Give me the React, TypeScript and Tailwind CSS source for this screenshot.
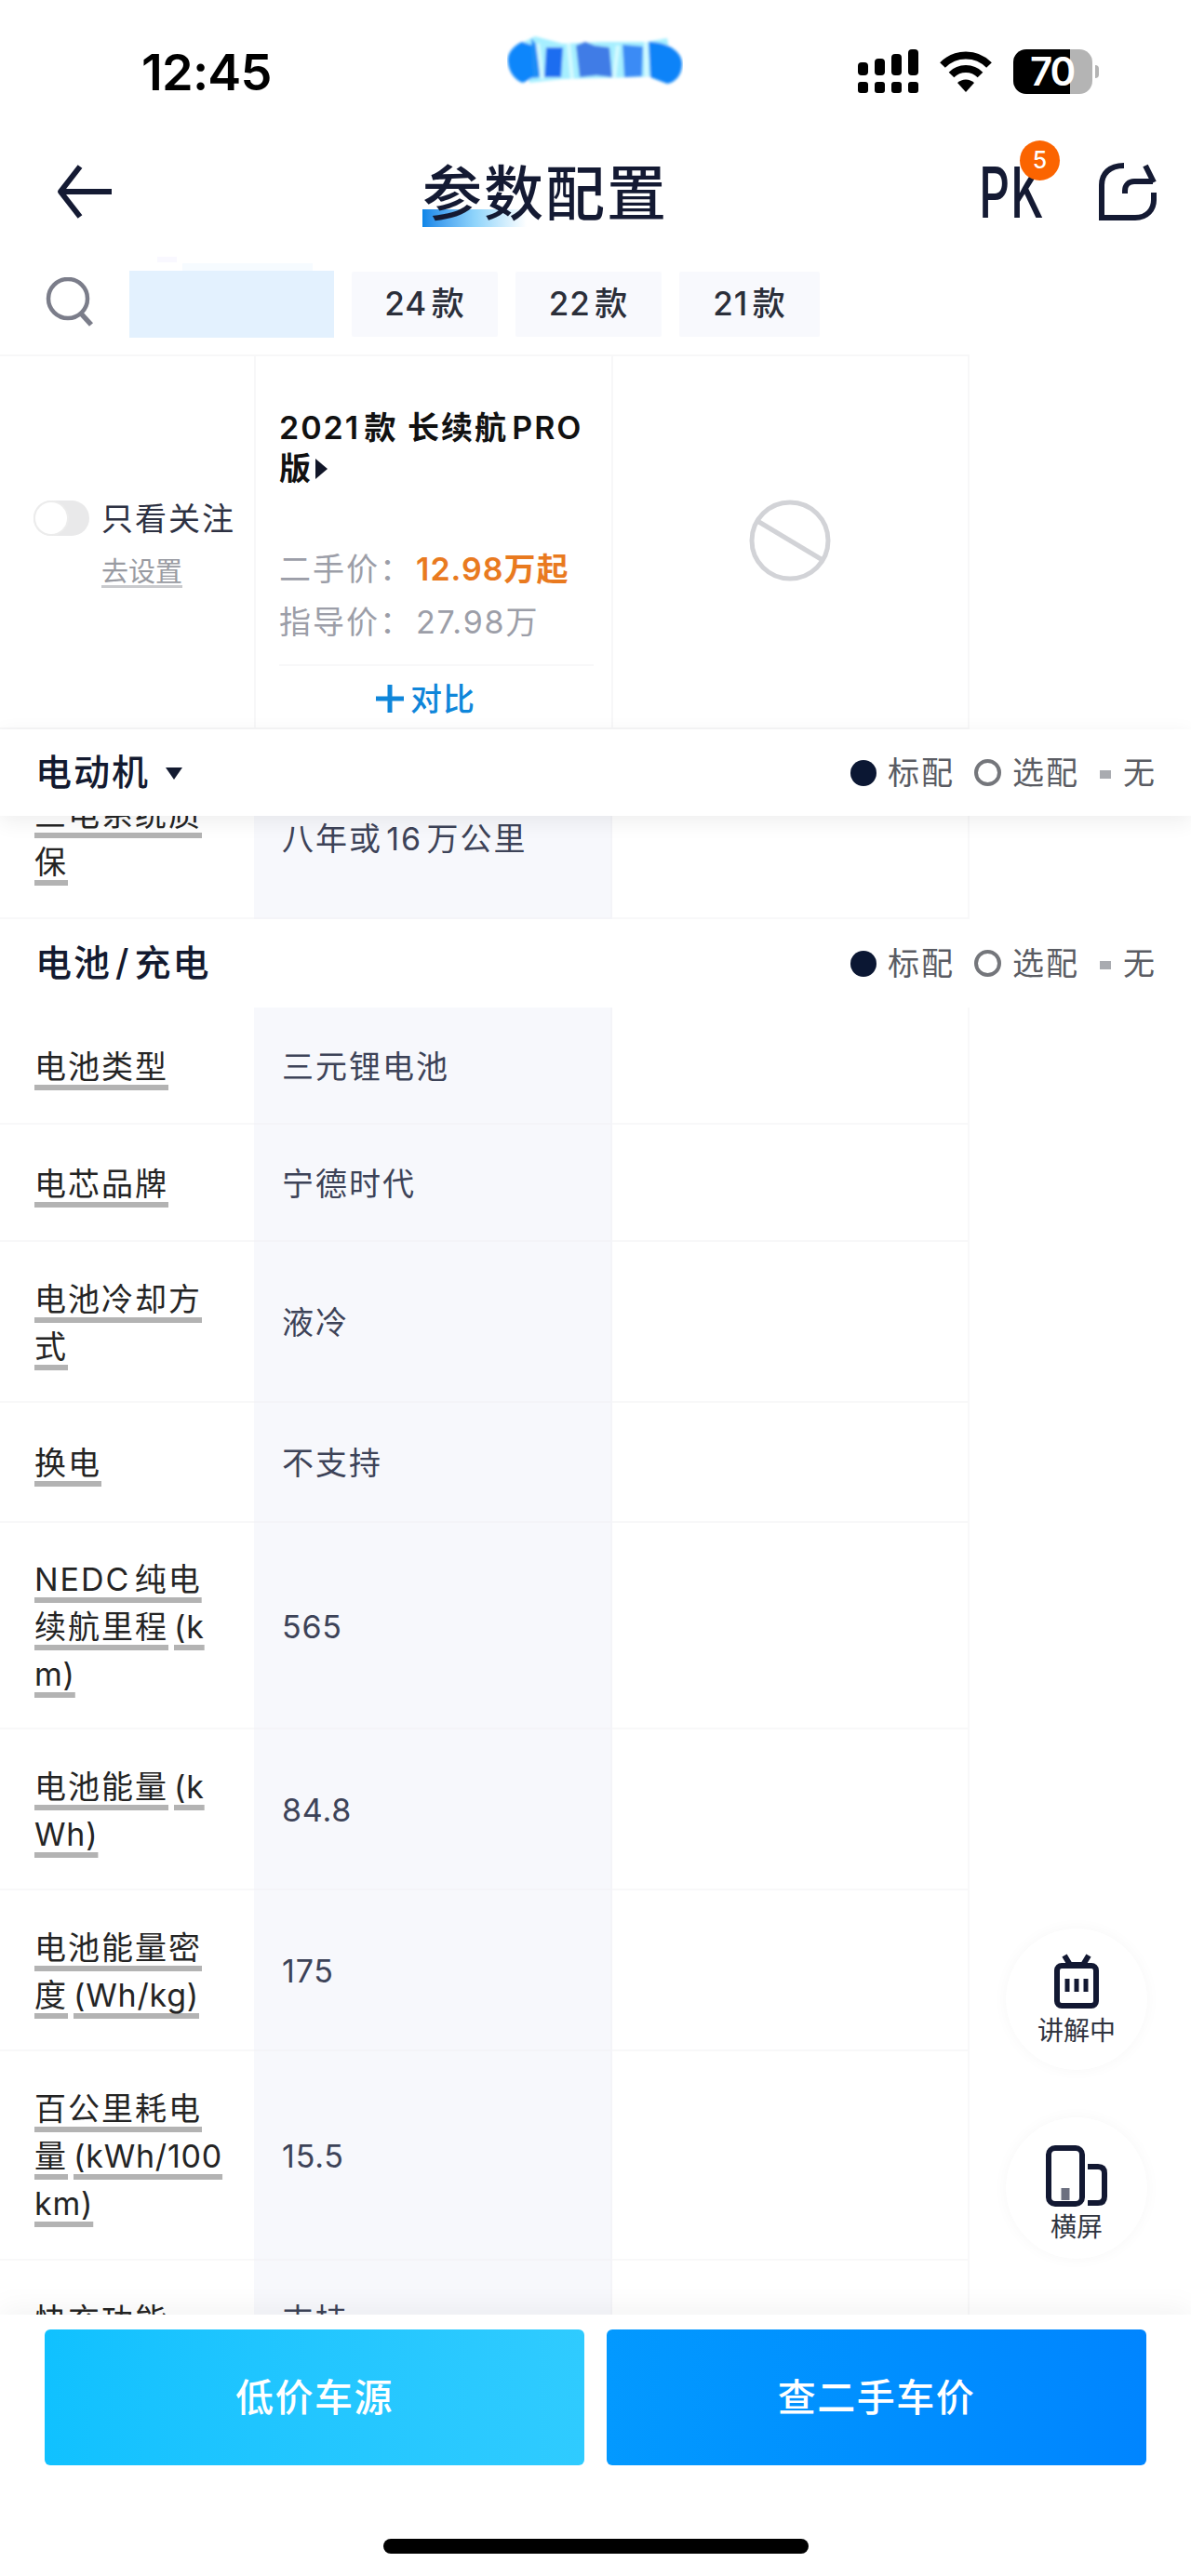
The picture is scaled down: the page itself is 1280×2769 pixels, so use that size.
const YEARS = ["24款", "22款", "21款"];

type Row = {
  height: string;
  label: string[][];
  value: string;
};

// Each label is a list of lines, and each line a list of underlined runs.
const MOTOR_ROWS: Row[] = [
  { height: "h-[174px]", label: [["三电系统质"], ["保"]], value: "八年或16万公里" },
];

const BATTERY_ROWS: Row[] = [
  { height: "h-[126px]", label: [["电池类型"]], value: "三元锂电池" },
  { height: "h-[126px]", label: [["电芯品牌"]], value: "宁德时代" },
  { height: "h-[173px]", label: [["电池冷却方"], ["式"]], value: "液冷" },
  { height: "h-[129px]", label: [["换电"]], value: "不支持" },
  { height: "h-[222px]", label: [["NEDC纯电"], ["续航里程", "(k"], ["m)"]], value: "565" },
  { height: "h-[173px]", label: [["电池能量", "(k"], ["Wh)"]], value: "84.8" },
  { height: "h-[173px]", label: [["电池能量密"], ["度", "(Wh/kg)"]], value: "175" },
  { height: "h-[225px]", label: [["百公里耗电"], ["量", "(kWh/100"], ["km)"]], value: "15.5" },
  { height: "h-[126px]", label: [["快充功能"]], value: "支持" },
];

// Latin runs are set tighter than Chinese ones.
function tracking(text: string) {
  return /^[ -~]+$/.test(text) ? "tracking-[0.8px]" : "tracking-[2px]";
}

function StatusBar() {
  return (
    <div className="flex h-[130px] items-center pt-6 pl-[152px] text-black">
      <span className="w-[393px] text-[54px] font-semibold tracking-[-0.800px]">12:45</span>
      <svg className="mb-6 h-[56px] w-[189px]" viewBox="0 0 189 56">
        <defs>
          <filter id="soft" x="-10%" y="-20%" width="120%" height="140%">
            <feGaussianBlur stdDeviation="1.6" />
          </filter>
        </defs>
        <g filter="url(#soft)">
          <path d="M14 10 L30 2 L60 10 L100 8 L150 8 L172 4 L180 44 L140 46 L60 48 L24 52 Z" fill="#a6efff" />
          <path d="M16 8 C4 14 0 22 1 30 C2 42 10 50 17 52 L30 45 L28 20 L34 14 Z" fill="#0a86fb" />
          <path d="M26 4 L34 14 L35 46 L28 47 Z" fill="#1c8df6" />
          <path d="M42 14 H60 L58 46 H40 Z" fill="#1a6df0" />
          <path d="M74 12 L84 8 L94 12 L110 14 L113 46 L96 44 L78 46 Z" fill="#3f7be6" />
          <path d="M124 11 L146 13 L145 45 L126 46 Z" fill="#3a8bf5" />
          <path d="M152 8 C172 8 188 18 188 32 C188 44 180 52 172 53 L154 46 Z" fill="#0b83f8" />
          <path d="M33 10 L38 48 M66 10 L70 48 M119 12 L115 47 M149 8 L150 46" stroke="#d6fbff" strokeWidth="4" />
        </g>
      </svg>
      <svg className="ml-[188px] h-[48px] w-[66px]" viewBox="0 0 66 48" fill="#000">
        <rect x="0" y="14" width="11" height="14" rx="4" />
        <rect x="18" y="10" width="11" height="18" rx="4" />
        <rect x="36" y="5" width="11" height="23" rx="4" />
        <rect x="54" y="0" width="11" height="28" rx="4" />
        <rect x="0" y="35" width="11" height="12" rx="3" />
        <rect x="18" y="35" width="11" height="12" rx="3" />
        <rect x="36" y="35" width="11" height="12" rx="3" />
        <rect x="54" y="35" width="11" height="12" rx="3" />
      </svg>
      <svg className="ml-[22px] h-[46px] w-[56px]" viewBox="0 0 56 46">
        <path d="M3 16 A35 35 0 0 1 53 16" fill="none" stroke="#000" strokeWidth="8" />
        <path d="M12.500 26.500 A22 22 0 0 1 43.500 26.500" fill="none" stroke="#000" strokeWidth="8" />
        <path d="M28 45 L19 35 A13 13 0 0 1 37 35 Z" fill="#000" />
      </svg>
      <div className="ml-[23px] flex h-[48px] w-[85px] items-center justify-center rounded-[14px] bg-[linear-gradient(90deg,#000_72%,#b4b4b4_72%)] pr-[2px] text-[42px] leading-[48px] font-semibold tracking-[-2px] text-white">
        70
      </div>
      <div className="ml-[3px] h-[14px] w-[4px] rounded-r-full bg-[#b4b4b4]" />
    </div>
  );
}

function NavBar() {
  return (
    <div className="flex h-[152px] items-center text-[#141a33]">
      <svg className="ml-[60px] h-[60px] w-[62px]" viewBox="0 0 62 60" fill="none" stroke="currentColor" strokeWidth="6">
        <path d="M26 3 L5 30 L26 57" strokeLinejoin="round" />
        <path d="M5 30 H60" />
      </svg>
      <h1 className="relative ml-[332px] w-[262px] text-[64px] leading-[76px] font-medium tracking-[2px] whitespace-nowrap">
        <span className="absolute top-[57px] left-0 h-[19px] w-[112px] bg-linear-to-r from-[#0a86e8] via-[#8fd4fb] to-transparent" />
        <span className="relative top-[2px]">参数配置</span>
      </h1>
      <div className="relative ml-[336px] h-[76px] w-[86px]">
        <span className="block origin-left scale-x-[0.69] text-[75px] leading-[78px] font-medium tracking-[1px]">PK</span>
        <span className="absolute -top-[17px] left-[44px] flex size-[43px] items-center justify-center rounded-full bg-[#fb6400] text-[25px] font-medium text-white">
          5
        </span>
      </div>
      <svg className="ml-[42px] h-[66px] w-[64px]" viewBox="0 0 64 66" fill="none" stroke="currentColor" strokeWidth="6">
        <path d="M28 5 C12 5 4 14 4 26 V61 H40 C53 61 60 52 60 42 V34" />
        <path d="M29 35 V32 C29 26 33 22 39 22 H59" />
        <path d="M51 5 L60 23" />
      </svg>
    </div>
  );
}

function YearFilter() {
  return (
    <div className="flex h-[99px] items-center pb-[10px]">
      <svg className="ml-[49px] h-[58px] w-[52px]" viewBox="0 0 52 58" fill="none" stroke="#7b7d8a" strokeWidth="4.500">
        <circle cx="24" cy="23" r="21" />
        <path d="M38 39 L49 51" strokeWidth="5.500" />
      </svg>
      <div className="relative ml-[38px] h-[72px] w-[220px] bg-[#e3f1fe]">
        <div className="absolute -top-[8px] left-[57px] h-[8px] w-[140px] bg-[#f6fbff]" />
        <div className="absolute -top-[15px] left-[30px] h-[6px] w-[21px] bg-[#f9f8ff]" />
      </div>
      <div className="ml-[19px] flex gap-[19px]">
        {YEARS.map((year) => (
          <div
            key={year}
            className="flex h-[70px] w-[157px] items-center justify-center rounded-xs bg-[#f8f9fd] text-[35px] font-medium tracking-[1px] text-[#2b2f3a] last:w-[151px]"
          >
            {year}
          </div>
        ))}
      </div>
    </div>
  );
}

function CarHeader() {
  return (
    <div className="flex h-[403px] w-[1042px] border-y-2 border-[#f7f7f8]">
      <div className="w-[275px] border-r-2 border-[#f7f7f8] pt-[149px] pl-[36px]">
        <div className="flex h-[50px] items-center">
          <div className="h-[38px] w-[60px] rounded-full bg-[#e9e9ea]">
            <div className="size-[38px] rounded-full border-2 border-[#ececec] bg-white" />
          </div>
          <span className="ml-[13px] text-[34px] tracking-[2px] whitespace-nowrap text-[#2d3142]">只看关注</span>
        </div>
        <div className="mt-[11px] ml-[73px] text-[29px] leading-[44px] text-[#999ba2] underline decoration-[#c9cacd] decoration-3 underline-offset-4">
          去设置
        </div>
      </div>
      <div className="w-[384px] border-r-2 border-[#f7f7f8] pt-[55px] pl-[25px]">
        <h2 className="text-[34px] leading-[44px] font-semibold tracking-[2px] whitespace-nowrap text-[#111]">
          2021款 长续航PRO
          <br />
          <span className="flex items-center">
            版
            <span className="ml-[3px] border-y-[11px] border-l-[13px] border-y-transparent border-l-[#111628]" />
          </span>
        </h2>
        <div className="mt-[57px] text-[34px] leading-[57px] tracking-[2px] text-[#9c9ea8] [text-autospace:no-autospace]">
          <div className="flex">
            <span className="w-[147px] whitespace-nowrap">二手价：</span>
            <span className="font-semibold tracking-[1px] text-[#e97a1f]">12.98万起</span>
          </div>
          <div className="flex">
            <span className="w-[147px] whitespace-nowrap">指导价：</span>
            <span className="tracking-[1.800px]">27.98万</span>
          </div>
        </div>
        <div className="mt-[17px] w-[338px] border-t-2 border-[#f8f8f9]" />
        <div className="flex h-[70px] items-center pl-[104px] text-[34px] font-medium tracking-[1px] text-[#0f86da]">
          <svg className="mr-[7px] size-[30px]" viewBox="0 0 30 30" stroke="currentColor" strokeWidth="5">
            <path d="M15 0 V30 M0 15 H30" />
          </svg>
          对比
        </div>
      </div>
      <div className="flex flex-1 items-center justify-center border-r-2 border-[#f7f7f8] pr-[2px] pb-[4px]">
        <svg className="size-[90px]" viewBox="0 0 90 90" fill="none" stroke="#d2d3d7" strokeWidth="5">
          <circle cx="45" cy="45" r="41" />
          <path d="M10 24 L80 66" />
        </svg>
      </div>
    </div>
  );
}

function Legend() {
  return (
    <div className="flex items-center text-[34px] tracking-[2px] text-[#5a5c63]">
      <span className="mr-[12px] size-[28px] rounded-full bg-[#0b1733]" />
      标配
      <span className="mr-[12px] ml-[21px] size-[29px] rounded-full border-4 border-[#74767b]" />
      选配
      <span className="mr-[13px] ml-[22px] mt-1 h-[9px] w-[12px] bg-[#a9abb0]" />
      无
    </div>
  );
}

function SectionBar({ title, caret, height }: { title: string; caret?: boolean; height: string }) {
  return (
    <div className={"flex items-center justify-between bg-white pr-[37px] pl-[38px] " + height}>
      <div className="flex items-center text-[39px] font-medium tracking-[2px] text-[#131a30]">
        {title.split("/").map((part, i) => (
          <span key={part}>
            {i > 0 && <span className="mx-[4px]">/</span>}
            {part}
          </span>
        ))}
        {caret && (
          <span className="mt-[2px] ml-[17px] border-x-[9px] border-t-[13px] border-x-transparent border-t-[#131a30]" />
        )}
      </div>
      <Legend />
    </div>
  );
}

function SpecRow({ row }: { row: Row }) {
  return (
    <div className={"flex w-[1042px] " + row.height}>
      <div className="flex w-[273px] flex-col justify-center border-b-2 border-[#f8f8f9] pt-[2px] pl-[37px] text-[34px] leading-[51px] text-[#242424]">
        {row.label.map((line) => (
          <div key={line.join("")} className="flex gap-[6px] whitespace-nowrap">
            {line.map((run) => (
              <span
                key={run}
                className={
                  "underline decoration-[#b3b3b3] decoration-[6px] underline-offset-[7px] [text-decoration-skip-ink:none] " +
                  tracking(run)
                }
              >
                {run}
              </span>
            ))}
          </div>
        ))}
      </div>
      <div
        className={
          "flex w-[385px] items-center border-r-2 border-b-2 border-[#f4f4f8] bg-[#f7f8fc] pt-[2px] pl-[30px] text-[34px] text-[#3d4358] " +
          tracking(row.value)
        }
      >
        {row.value}
      </div>
      <div className="flex-1 border-r-2 border-b-2 border-[#f8f8f9]" />
    </div>
  );
}

function FloatingActions() {
  const button =
    "flex size-[152px] flex-col items-center rounded-full bg-white text-[28px] leading-[36px] text-[#30343f] shadow-[0_0_16px_rgba(0,0,0,0.035)]";
  return (
    <div className="absolute top-[2073px] left-[1081px] flex flex-col gap-[51px]">
      <div className={button + " pt-[27px]"}>
        <svg className="h-[60px] w-[50px]" viewBox="0 0 50 60" fill="none" stroke="#121832" strokeWidth="6">
          <rect x="4" y="13" width="42" height="43" rx="5" />
          <path d="M12 2 L18 12 H32 L38 2" />
          <path d="M15 27 V41 M25 27 V41 M35 27 V41" strokeWidth="5" />
        </svg>
        <span className="mt-[5px]">讲解中</span>
      </div>
      <div className={button + " pt-[29px]"}>
        <svg className="h-[68px] w-[68px]" viewBox="0 0 68 68" fill="none" stroke="#121832" strokeWidth="6">
          <rect x="4" y="4" width="36" height="60" rx="7" />
          <path d="M22 47 V60" stroke="#6c7080" strokeWidth="9" />
          <path d="M46 24 H57 Q64 24 64 31 V56 Q64 63 57 63 H46" />
        </svg>
        <span className="mt-[3px]">横屏</span>
      </div>
    </div>
  );
}

export default function App() {
  return (
    <main className="relative flex h-[2769px] w-[1280px] flex-col overflow-hidden bg-white font-['Inter','Noto_Sans_CJK_SC',sans-serif] [text-autospace:normal]">
      <StatusBar />
      <NavBar />
      <YearFilter />
      <CarHeader />
      <div className="z-10 shadow-[0_6px_22px_rgba(0,0,0,0.07)]">
        <SectionBar title="电动机" caret height="h-[93px]" />
      </div>
      <div className="h-[1611px] overflow-hidden">
        <div className="-mt-[63px]">
          {MOTOR_ROWS.map((row) => (
            <SpecRow key={row.value} row={row} />
          ))}
          <SectionBar title="电池/充电" height="h-[95px]" />
          {BATTERY_ROWS.map((row) => (
            <SpecRow key={row.value} row={row} />
          ))}
        </div>
      </div>
      <footer className="z-10 flex flex-1 flex-col items-center bg-white pt-[16px] shadow-[0_-6px_30px_rgba(0,0,0,0.05)]">
        <div className="flex gap-[24px] text-[41px] font-medium tracking-[1.500px] text-white">
          <button className="h-[146px] w-[580px] rounded-md bg-linear-to-r from-[#10c1ff] to-[#2fcbff] pt-[2px]">
            低价车源
          </button>
          <button className="h-[146px] w-[580px] rounded-md bg-linear-to-r from-[#0399ff] to-[#0085ff] pt-[2px]">
            查二手车价
          </button>
        </div>
        <div className="mt-[79px] h-[16px] w-[457px] rounded-full bg-black" />
      </footer>
      <FloatingActions />
    </main>
  );
}
